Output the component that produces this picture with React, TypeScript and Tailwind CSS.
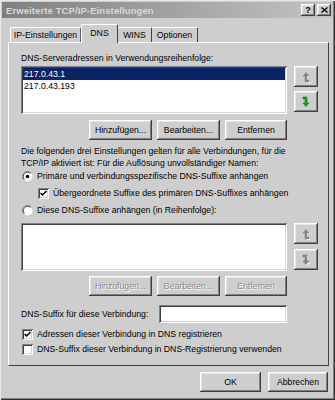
import React from 'react';

const raised =
  'shadow-[inset_-1px_-1px_0_#404040,inset_1px_1px_0_#ffffff,inset_-2px_-2px_0_#808080,inset_2px_2px_0_#e4e4e4]';
const sunken =
  'shadow-[inset_1px_1px_0_#808080,inset_-1px_-1px_0_#ffffff,inset_2px_2px_0_#404040,inset_-2px_-2px_0_#d4d4d4]';

function Button({ label, w, disabled }: { label: string; w: string; disabled?: boolean }) {
  return (
    <div
      className={`${w} h-[20px] ${raised} bg-[#cecece] flex items-center justify-center ${
        disabled ? 'text-[#8a8a8a] [text-shadow:1px_1px_0_#ffffff]' : 'text-black'
      }`}
    >
      {label}
    </div>
  );
}

function ArrowButton({ dir, green }: { dir: 'up' | 'down'; green?: boolean }) {
  const fill = green ? '#10b010' : '#8a8a8a';
  const stroke = green ? '#0a5a0a' : '#6a6a6a';
  return (
    <div className={`w-[24px] h-[21px] ${raised} bg-[#cecece] flex items-center justify-center`}>
      <svg width="10" height="12" viewBox="0 0 10 12">
        {dir === 'up' ? (
          <g>
            <path d="M2 5 L5 1.5 L8 5 L6 5 L6 9 L8 9 L8 11 L4 11 L4 5 Z" fill="#ffffff" transform="translate(1,1)" />
            <path d="M2 5 L5 1.5 L8 5 L6 5 L6 9 L8 9 L8 11 L4 11 L4 5 Z" fill={fill} stroke={stroke} strokeWidth="0.4" />
          </g>
        ) : (
          <g>
            {!green && (
              <path d="M2 1 L6 1 L6 7 L8 7 L5 10.5 L2 7 L4 7 L4 3 L2 3 Z" fill="#ffffff" transform="translate(1,1)" />
            )}
            <path d="M2 1 L6 1 L6 7 L8 7 L5 10.5 L2 7 L4 7 L4 3 L2 3 Z" fill={fill} stroke={stroke} strokeWidth="0.5" />
          </g>
        )}
      </svg>
    </div>
  );
}

function Radio({ checked }: { checked?: boolean }) {
  return (
    <svg width="11" height="11" viewBox="0 0 12 12" className="shrink-0">
      <circle cx="6" cy="6" r="5.5" fill="#ffffff" />
      <path d="M10 2 A5.5 5.5 0 0 0 2 10" stroke="#808080" strokeWidth="1" fill="none" />
      <path d="M9.2 2.8 A4.5 4.5 0 0 0 2.8 9.2" stroke="#404040" strokeWidth="1" fill="none" />
      {checked && <circle cx="6" cy="6" r="2" fill="#000000" />}
    </svg>
  );
}

function Check({ checked }: { checked?: boolean }) {
  return (
    <div className={`w-[11px] h-[11px] shrink-0 bg-white ${sunken} flex items-center justify-center`}>
      {checked && (
        <svg width="7" height="7" viewBox="0 0 7 7">
          <path d="M0.5 3 L2.5 5 L6.5 1" stroke="#000" strokeWidth="1.5" fill="none" />
        </svg>
      )}
    </div>
  );
}

export default function App() {
  return (
    <div className="w-[335px] h-[400px] overflow-hidden bg-[#cecece] font-['Liberation_Sans',Arial,sans-serif] text-[8.7px] leading-[11px] text-black shadow-[inset_1px_1px_0_#e8e8e8,inset_-1px_-1px_0_#303030,inset_-2px_-2px_0_#808080] p-[2px]">
      {/* title bar */}
      <div className="h-[16px] bg-gradient-to-r from-[#808080] to-[#c4c4c4] flex items-center justify-between pl-[4px] pr-[2px]">
        <span className="text-[#d8d8d8] font-bold text-[9.5px] tracking-[0.1px]">Erweiterte TCP/IP-Einstellungen</span>
        <div className="flex gap-[2px]">
          <div className={`w-[14px] h-[12px] ${raised} bg-[#cecece] flex items-center justify-center font-bold text-[9px]`}>?</div>
          <div className={`w-[14px] h-[12px] ${raised} bg-[#cecece] flex items-center justify-center`}>
            <svg width="7" height="6" viewBox="0 0 7 6">
              <path d="M0.5 0.5 L6.5 5.5 M6.5 0.5 L0.5 5.5" stroke="#000" strokeWidth="1.4" />
            </svg>
          </div>
        </div>
      </div>

      {/* tabs */}
      <div className="mt-[6px] ml-[6px] h-[18px] flex items-end">
        <div className="ml-[2px] w-[71px] h-[15px] bg-[#cecece] border-l border-t border-white border-r border-r-[#606060] rounded-t-[2px] flex items-center justify-center">
          IP-Einstellungen
        </div>
        <div className="relative z-10 w-[37px] h-[19px] -mb-[1px] bg-[#cecece] border-l border-t border-white border-r border-r-[#404040] rounded-t-[2px] flex items-start pt-[3px] justify-center">
          DNS
        </div>
        <div className="w-[34px] h-[15px] bg-[#cecece] border-t border-white border-r border-r-[#404040] rounded-t-[2px] flex items-center justify-center">
          WINS
        </div>
        <div className="w-[46px] h-[15px] bg-[#cecece] border-t border-white border-r border-r-[#404040] rounded-t-[2px] flex items-center justify-center">
          Optionen
        </div>
      </div>

      {/* panel */}
      <div className="ml-[6px] w-[321px] h-[324px] border-l border-t border-white border-r border-b border-r-[#404040] border-b-[#404040] pl-[12px] pt-[10px]">
        <div className="h-[11px]">DNS-Serveradressen in Verwendungsreihenfolge:</div>
        <div className="mt-[2px] flex items-start">
          <div className={`w-[266px] h-[48px] bg-white ${sunken} p-[2px]`}>
            <div className="h-[12px] bg-[#0a246a] text-white pl-[1px] leading-[12px]">217.0.43.1</div>
            <div className="h-[12px] pl-[1px] leading-[12px]">217.0.43.193</div>
          </div>
          <div className="ml-[7px] flex flex-col gap-[4px]">
            <ArrowButton dir="up" />
            <ArrowButton dir="down" green />
          </div>
        </div>
        <div className="mt-[6px] w-[266px] flex justify-end gap-[5px]">
          <Button label="Hinzufügen..." w="w-[63px]" />
          <Button label="Bearbeiten..." w="w-[63px]" />
          <Button label="Entfernen" w="w-[62px]" />
        </div>

        <div className="mt-[6px] leading-[11.5px]">
          Die folgenden drei Einstellungen gelten für alle Verbindungen, für die
          <br />
          TCP/IP aktiviert ist: Für die Auflösung unvollständiger Namen:
        </div>
        <div className="mt-[1px] h-[12px] flex items-center gap-[4px] pl-[1px]">
          <Radio checked />
          <span>Primäre und verbindungsspezifische DNS-Suffixe anhängen</span>
        </div>
        <div className="mt-[5px] h-[12px] flex items-center gap-[4px] pl-[17px]">
          <Check checked />
          <span>Übergeordnete Suffixe des primären DNS-Suffixes anhängen</span>
        </div>
        <div className="mt-[5px] h-[12px] flex items-center gap-[4px] pl-[1px]">
          <Radio />
          <span>Diese DNS-Suffixe anhängen (in Reihenfolge):</span>
        </div>
        <div className="mt-[7px] flex items-start">
          <div className={`w-[266px] h-[48px] bg-white ${sunken}`} />
          <div className="ml-[7px] flex flex-col gap-[5px]">
            <ArrowButton dir="up" />
            <ArrowButton dir="down" />
          </div>
        </div>
        <div className="mt-[5px] w-[266px] flex justify-end gap-[5px]">
          <Button label="Hinzufügen..." w="w-[63px]" disabled />
          <Button label="Bearbeiten..." w="w-[63px]" disabled />
          <Button label="Entfernen" w="w-[62px]" disabled />
        </div>

        <div className="mt-[9px] w-[266px] flex items-center justify-between">
          <span>DNS-Suffix für diese Verbindung:</span>
          <div className={`w-[128px] h-[18px] bg-white ${sunken}`} />
        </div>
        <div className="mt-[5px] h-[12px] flex items-center gap-[4px] pl-[1px]">
          <Check checked />
          <span>Adressen dieser Verbindung in DNS registrieren</span>
        </div>
        <div className="mt-[3px] h-[12px] flex items-center gap-[4px] pl-[1px]">
          <Check />
          <span>DNS-Suffix dieser Verbindung in DNS-Registrierung verwenden</span>
        </div>
      </div>

      {/* footer */}
      <div className="mt-[6px] ml-[198px] flex gap-[7px]">
        <Button label="OK" w="w-[61px]" />
        <Button label="Abbrechen" w="w-[60px]" />
      </div>
    </div>
  );
}
